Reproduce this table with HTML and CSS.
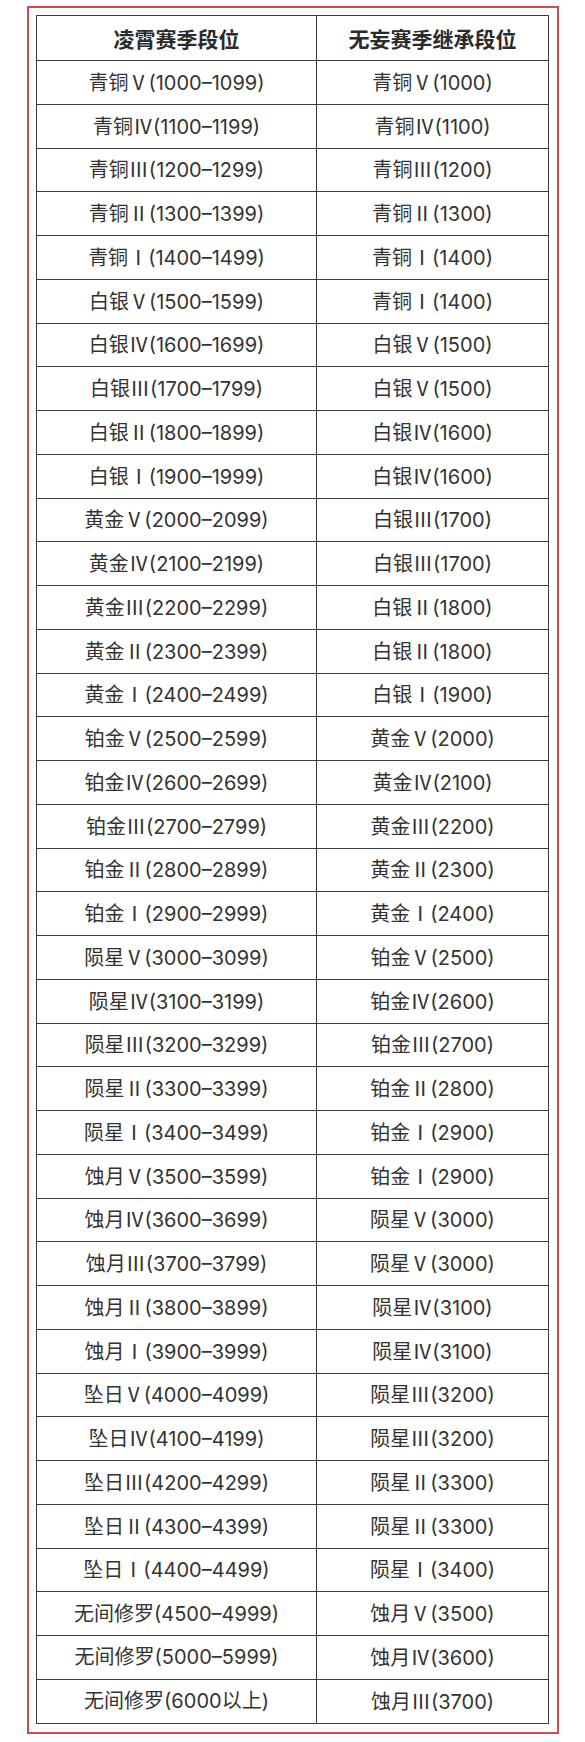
FILE: index.html
```html
<!DOCTYPE html>
<html lang="zh">
<head>
<meta charset="utf-8">
<title>段位继承</title>
<link rel="stylesheet" href="styles.css">
</head>
<body>
<div class="frame">
<table class="rank">
<thead>
<tr><th>凌霄赛季段位</th><th>无妄赛季继承段位</th></tr>
</thead>
<tbody>
<tr><td>青铜<span class="rn">Ⅴ</span>(1000–1099)</td><td>青铜<span class="rn">Ⅴ</span>(1000)</td></tr>
<tr><td>青铜<span class="rn">Ⅳ</span>(1100–1199)</td><td>青铜<span class="rn">Ⅳ</span>(1100)</td></tr>
<tr><td>青铜<span class="rn">Ⅲ</span>(1200–1299)</td><td>青铜<span class="rn">Ⅲ</span>(1200)</td></tr>
<tr><td>青铜<span class="rn">Ⅱ</span>(1300–1399)</td><td>青铜<span class="rn">Ⅱ</span>(1300)</td></tr>
<tr><td>青铜<span class="rn">Ⅰ</span>(1400–1499)</td><td>青铜<span class="rn">Ⅰ</span>(1400)</td></tr>
<tr><td>白银<span class="rn">Ⅴ</span>(1500–1599)</td><td>青铜<span class="rn">Ⅰ</span>(1400)</td></tr>
<tr><td>白银<span class="rn">Ⅳ</span>(1600–1699)</td><td>白银<span class="rn">Ⅴ</span>(1500)</td></tr>
<tr><td>白银<span class="rn">Ⅲ</span>(1700–1799)</td><td>白银<span class="rn">Ⅴ</span>(1500)</td></tr>
<tr><td>白银<span class="rn">Ⅱ</span>(1800–1899)</td><td>白银<span class="rn">Ⅳ</span>(1600)</td></tr>
<tr><td>白银<span class="rn">Ⅰ</span>(1900–1999)</td><td>白银<span class="rn">Ⅳ</span>(1600)</td></tr>
<tr><td>黄金<span class="rn">Ⅴ</span>(2000–2099)</td><td>白银<span class="rn">Ⅲ</span>(1700)</td></tr>
<tr><td>黄金<span class="rn">Ⅳ</span>(2100–2199)</td><td>白银<span class="rn">Ⅲ</span>(1700)</td></tr>
<tr><td>黄金<span class="rn">Ⅲ</span>(2200–2299)</td><td>白银<span class="rn">Ⅱ</span>(1800)</td></tr>
<tr><td>黄金<span class="rn">Ⅱ</span>(2300–2399)</td><td>白银<span class="rn">Ⅱ</span>(1800)</td></tr>
<tr><td>黄金<span class="rn">Ⅰ</span>(2400–2499)</td><td>白银<span class="rn">Ⅰ</span>(1900)</td></tr>
<tr><td>铂金<span class="rn">Ⅴ</span>(2500–2599)</td><td>黄金<span class="rn">Ⅴ</span>(2000)</td></tr>
<tr><td>铂金<span class="rn">Ⅳ</span>(2600–2699)</td><td>黄金<span class="rn">Ⅳ</span>(2100)</td></tr>
<tr><td>铂金<span class="rn">Ⅲ</span>(2700–2799)</td><td>黄金<span class="rn">Ⅲ</span>(2200)</td></tr>
<tr><td>铂金<span class="rn">Ⅱ</span>(2800–2899)</td><td>黄金<span class="rn">Ⅱ</span>(2300)</td></tr>
<tr><td>铂金<span class="rn">Ⅰ</span>(2900–2999)</td><td>黄金<span class="rn">Ⅰ</span>(2400)</td></tr>
<tr><td>陨星<span class="rn">Ⅴ</span>(3000–3099)</td><td>铂金<span class="rn">Ⅴ</span>(2500)</td></tr>
<tr><td>陨星<span class="rn">Ⅳ</span>(3100–3199)</td><td>铂金<span class="rn">Ⅳ</span>(2600)</td></tr>
<tr><td>陨星<span class="rn">Ⅲ</span>(3200–3299)</td><td>铂金<span class="rn">Ⅲ</span>(2700)</td></tr>
<tr><td>陨星<span class="rn">Ⅱ</span>(3300–3399)</td><td>铂金<span class="rn">Ⅱ</span>(2800)</td></tr>
<tr><td>陨星<span class="rn">Ⅰ</span>(3400–3499)</td><td>铂金<span class="rn">Ⅰ</span>(2900)</td></tr>
<tr><td>蚀月<span class="rn">Ⅴ</span>(3500–3599)</td><td>铂金<span class="rn">Ⅰ</span>(2900)</td></tr>
<tr><td>蚀月<span class="rn">Ⅳ</span>(3600–3699)</td><td>陨星<span class="rn">Ⅴ</span>(3000)</td></tr>
<tr><td>蚀月<span class="rn">Ⅲ</span>(3700–3799)</td><td>陨星<span class="rn">Ⅴ</span>(3000)</td></tr>
<tr><td>蚀月<span class="rn">Ⅱ</span>(3800–3899)</td><td>陨星<span class="rn">Ⅳ</span>(3100)</td></tr>
<tr><td>蚀月<span class="rn">Ⅰ</span>(3900–3999)</td><td>陨星<span class="rn">Ⅳ</span>(3100)</td></tr>
<tr><td>坠日<span class="rn">Ⅴ</span>(4000–4099)</td><td>陨星<span class="rn">Ⅲ</span>(3200)</td></tr>
<tr><td>坠日<span class="rn">Ⅳ</span>(4100–4199)</td><td>陨星<span class="rn">Ⅲ</span>(3200)</td></tr>
<tr><td>坠日<span class="rn">Ⅲ</span>(4200–4299)</td><td>陨星<span class="rn">Ⅱ</span>(3300)</td></tr>
<tr><td>坠日<span class="rn">Ⅱ</span>(4300–4399)</td><td>陨星<span class="rn">Ⅱ</span>(3300)</td></tr>
<tr><td>坠日<span class="rn">Ⅰ</span>(4400–4499)</td><td>陨星<span class="rn">Ⅰ</span>(3400)</td></tr>
<tr><td>无间修罗(4500–4999)</td><td>蚀月<span class="rn">Ⅴ</span>(3500)</td></tr>
<tr><td>无间修罗(5000–5999)</td><td>蚀月<span class="rn">Ⅳ</span>(3600)</td></tr>
<tr><td>无间修罗(6000以上)</td><td>蚀月<span class="rn">Ⅲ</span>(3700)</td></tr>
</tbody>
</table>
</div>
</body>
</html>
```

FILE: styles.css
```css
html, body {
  margin: 0;
  padding: 0;
  background: #ffffff;
}

body {
  font-family: "Noto Sans CJK SC", "Noto Sans", sans-serif;
  color: #333333;
}

.frame {
  box-sizing: border-box;
  width: 532px;
  margin: 6px 0 0 27px;
  padding: 7px 9px 8px 7px;
  border: 2px solid #d24a4a;
}

.rank {
  width: 513px;
  border-collapse: collapse;
  table-layout: fixed;
}

.rank th,
.rank td {
  border: 1.5px solid #3c3c3c;
  text-align: center;
  vertical-align: middle;
  padding: 0;
  line-height: 1;
  white-space: nowrap;
}

.rank th:first-child,
.rank td:first-child {
  width: 279px;
}

.rank thead tr {
  height: 45px;
}

.rank th {
  font-size: 21px;
  font-weight: 700;
  color: #2a2a2a;
}

.rank tbody tr {
  height: 43.76px;
}

.rank td {
  font-family: "Inter", "Noto Sans CJK SC", sans-serif;
  font-size: 20px;
  font-weight: 400;
}

.rank .rn {
  font-family: "Noto Sans CJK SC", sans-serif;
}
```
